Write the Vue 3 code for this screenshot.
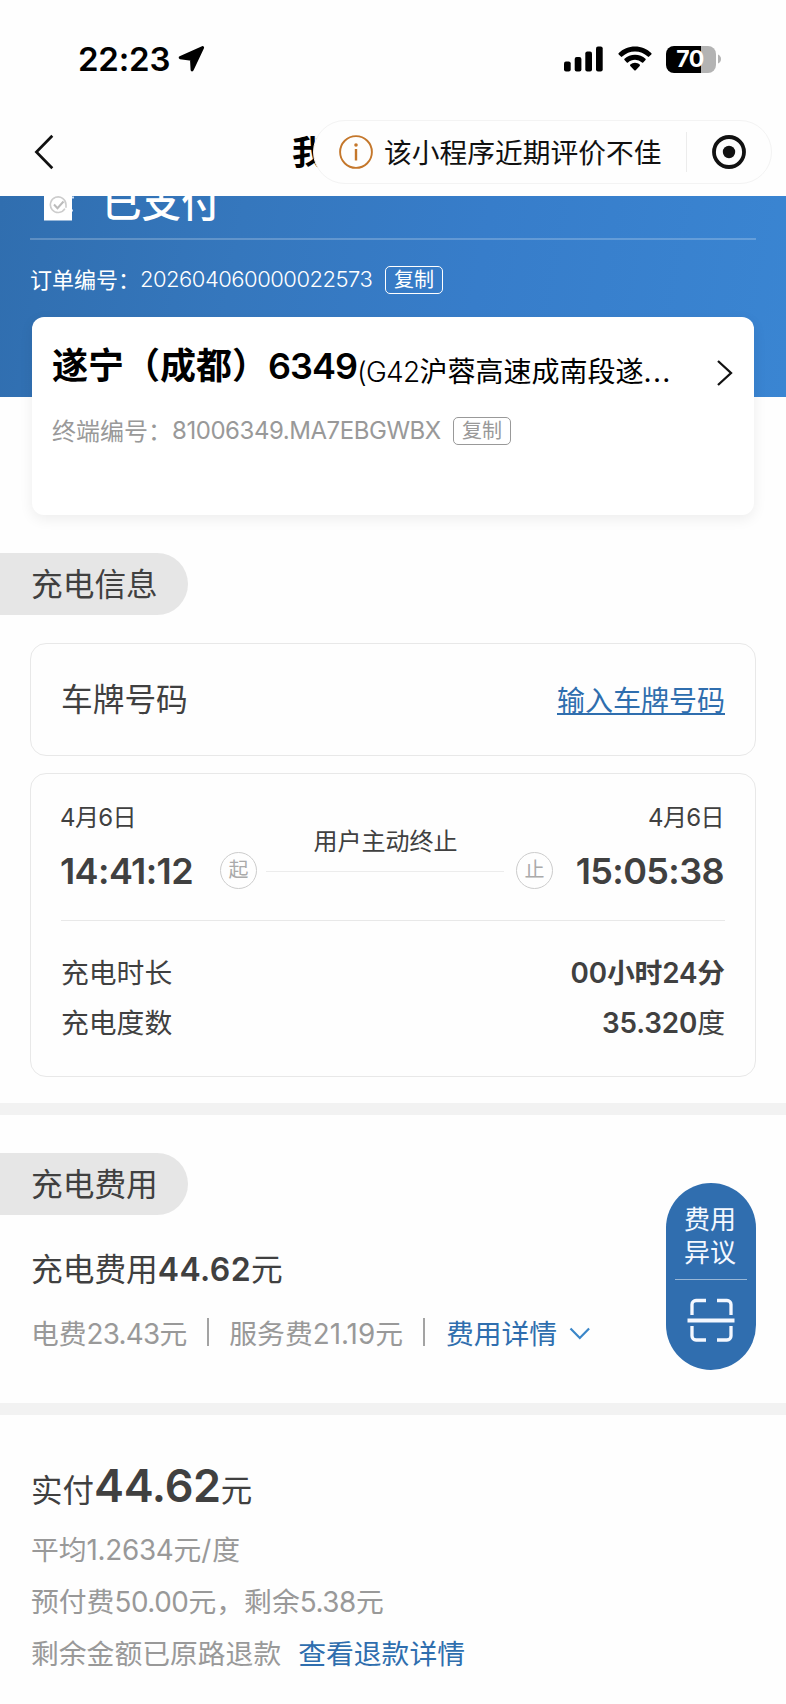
<template>
  <div class="page">
    <div class="status-bar">
      <div class="clock">
        <span class="clock-text">22:23</span>
        <svg width="28" height="28" viewBox="0 0 28 28">
          <path d="M24.600 2.600 2.200 12.700l11.300 1.600.6 10.600z" fill="#000" stroke="#000" stroke-width="3" stroke-linejoin="round" />
        </svg>
      </div>
      <div class="indicators">
        <svg class="signal" width="39" height="26" viewBox="0 0 39 26">
          <rect v-for="bar in signalBars" :key="bar.x" :x="bar.x" :y="bar.y" width="6.700" :height="25.5 - bar.y" rx="2" />
        </svg>
        <svg class="wifi" width="34" height="26" viewBox="0 0 34 26">
          <path d="M17 .5c6.300 0 12.200 2.500 16.300 6.600.4.4.4.900 0 1.300l-2.200 2.200c-.4.4-.9.4-1.300 0A18.300 18.300 0 0 0 17 5.400 18.300 18.300 0 0 0 4.200 10.600c-.4.4-.9.4-1.300 0L.7 8.400c-.4-.4-.4-.9 0-1.300C4.800 3 10.700.5 17 .5z" />
          <path d="M17 8.700c4 0 7.700 1.500 10.500 4.100.4.400.4.900 0 1.300l-2.300 2.300c-.3.300-.8.300-1.200 0A10.400 10.400 0 0 0 17 13.700c-2.700 0-5.100 1-7 2.700-.4.300-.9.300-1.200 0l-2.300-2.300c-.4-.4-.4-.9 0-1.300A15.400 15.400 0 0 1 17 8.700z" />
          <path d="M17 16.800c1.800 0 3.500.7 4.700 1.800.4.4.4.900 0 1.300l-4 4.300c-.4.400-1 .4-1.400 0l-4-4.300c-.4-.4-.4-.9 0-1.300a7 7 0 0 1 4.700-1.800z" />
        </svg>
        <div class="battery">70</div>
        <svg class="battery-tip" width="3" height="10" viewBox="0 0 3 10">
          <path d="M0 0.500C2 1.500 3 3 3 5S2 8.500 0 9.500z" fill="#b3b3b3" />
        </svg>
      </div>
    </div>

    <div class="nav">
      <svg class="back" width="20" height="36" viewBox="0 0 20 36">
        <path d="M18.300 1.700 2.400 18l15.900 16.300" fill="none" stroke="#111" stroke-width="2.700" />
      </svg>
      <div class="nav-title">我</div>
      <div class="capsule">
        <svg class="info" width="34" height="34" viewBox="0 0 34 34">
          <circle cx="17" cy="17" r="15.900" fill="none" stroke="#c4772b" stroke-width="1.900" />
          <circle cx="17" cy="10" r="1.800" fill="#c4772b" />
          <path d="M17 14v11.500" stroke="#c4772b" stroke-width="2.400" />
        </svg>
        <span class="capsule-text">该小程序近期评价不佳</span>
        <i class="capsule-line"></i>
        <svg width="34" height="34" viewBox="0 0 34 34">
          <circle cx="17" cy="17" r="15" fill="none" stroke="#111" stroke-width="3.800" />
          <circle cx="17" cy="17" r="6.200" fill="#111" />
        </svg>
      </div>
    </div>

    <div class="hero">
      <div class="pay-state">
        <svg class="pay-icon" width="30" height="25" viewBox="0 0 30 25">
          <path d="M0 0h28v24.500H0z" fill="#fff" />
          <path d="M28 1.500h2M28 14.500h1" stroke="#cfe0f8" stroke-width="2" />
          <path d="M20.900 12.700A7.800 7.800 0 1 1 22 8.700v3" fill="none" stroke="#ccc" stroke-width="1.600" />
          <path d="m10 8.500 3.500 3.700 6-6.700" fill="none" stroke="#bbb" stroke-width="2" />
        </svg>
        <span class="pay-text">已支付</span>
      </div>
      <div class="order-row">
        <span class="label">订单编号：</span>
        <span class="order-no">202604060000022573</span>
        <span class="copy">复制</span>
      </div>
    </div>

    <div class="station">
      <div class="station-head">
        <div class="station-name">遂宁（成都）<span class="station-num">6349</span></div>
        <div class="station-addr"><span class="addr-latin">(G42</span>沪蓉高速成南段遂<span class="dots">...</span></div>
        <svg width="18" height="28" viewBox="0 0 18 28">
          <path d="m2 2 13 12L2 26" fill="none" stroke="#111" stroke-width="2.300" />
        </svg>
      </div>
      <div class="terminal-row">
        <span class="label">终端编号：</span>
        <span class="terminal-no">81006349.MA7EBGWBX</span>
        <span class="copy gray">复制</span>
      </div>
    </div>

    <div class="section-tag">充电信息</div>

    <div class="box plate">
      <span class="plate-label">车牌号码</span>
      <a class="plate-link">输入车牌号码</a>
    </div>

    <div class="box detail">
      <div class="period">
        <div class="moment">
          <div class="date">4月6日</div>
          <div class="time">14:41:12</div>
        </div>
        <div class="dot">起</div>
        <div class="track">用户主动终止</div>
        <div class="dot">止</div>
        <div class="moment end">
          <div class="date">4月6日</div>
          <div class="time">15:05:38</div>
        </div>
      </div>
      <div class="row">
        <span>充电时长</span>
        <span class="strong">00小时24分</span>
      </div>
      <div class="row">
        <span>充电度数</span>
        <span><span class="strong">35.320</span>度</span>
      </div>
    </div>

    <div class="band"></div>

    <div class="section-tag">充电费用</div>
    <div class="fee-total">充电费用<b>44.62</b>元</div>
    <div class="fee-line">
      <span>电费<em class="power">23.43</em>元</span>
      <i></i>
      <span>服务费<em class="service">21.19</em>元</span>
      <i></i>
      <span class="link">费用详情</span>
      <svg width="22" height="13" viewBox="0 0 22 13">
        <path d="m1.500 1.500 9.300 9.500 9.300-9.500" fill="none" stroke="#3a86c8" stroke-width="2.200" />
      </svg>
    </div>

    <div class="band"></div>

    <div class="paid">
      <div class="paid-total">实付<b>44.62</b>元</div>
      <div class="paid-line">平均<em>1.2634</em>元<em class="slash">/</em>度</div>
      <div class="paid-line">预付费<em class="prepay">50.00</em>元，剩余<em class="prepay">5.38</em>元</div>
      <div class="paid-line">剩余金额已原路退款<span class="link refund">查看退款详情</span></div>
    </div>

    <!-- 悬浮按钮 -->
    <div class="fab">
      <div class="fab-text">费用<br />异议</div>
      <svg width="48" height="44" viewBox="0 0 48 44" fill="none" stroke="#f4f8ff">
        <path d="M5 17V6.500a4 4 0 0 1 4-4h10M30 2.500h10a4 4 0 0 1 4 4V17M5 28v10a4 4 0 0 0 4 4h10M30 42h10a4 4 0 0 0 4-4V28" stroke-width="3.300" />
        <path d="M.5 22.500h47" stroke-width="4" />
      </svg>
    </div>
  </div>
</template>

<script setup>
// 信号格
const signalBars = [
  { x: 0, y: 15.5 },
  { x: 10.7, y: 11 },
  { x: 21.3, y: 5.5 },
  { x: 32, y: 0.5 },
]
</script>

<style>
body { background: #fff; }
</style>

<style scoped>
.page {
  position: relative;
  width: 786px;
  height: 1704px;
  overflow: hidden;
  background: #fefefe;
  color: #404040;
  font-family: Inter, "Noto Sans CJK SC", sans-serif;
  font-size: 27.8px;
}
.page * { box-sizing: border-box; }
svg { display: block; flex: none; }
em { font-style: normal; letter-spacing: -.3px; }

.status-bar {
  height: 108px;
  padding: 10px 65px 0 78px;
  display: flex;
  justify-content: space-between;
  align-items: center;
}
.clock { display: flex; align-items: center; gap: 8px; color: #000; }
.clock-text { width: 92px; font-size: 33px; font-weight: 600; line-height: 40px; letter-spacing: -.2px; white-space: nowrap; }
.indicators { display: flex; align-items: center; }
.signal { margin-top: -1px; }
.wifi { margin: -1px 14px 0 15px; }
.battery {
  width: 50px;
  height: 27px;
  padding-right: 2px;
  border-radius: 8px;
  background: linear-gradient(90deg, #000 70%, #b3b3b3 70%);
  color: #fff;
  font-size: 23px;
  font-weight: 700;
  line-height: 27px;
  letter-spacing: -.5px;
  text-align: center;
}
.battery-tip { margin-left: 2px; }

.nav {
  position: relative;
  height: 88px;
  padding-left: 34px;
  display: flex;
  align-items: center;
  background: #fefefe;
}
.nav-title { margin: 2px 0 0 238px; font-size: 34px; font-weight: 700; color: #000; line-height: 40px; }
.capsule {
  position: absolute;
  left: 313px;
  top: 12px;
  width: 459px;
  height: 64px;
  padding: 0 25px;
  border: 1px solid #f3f3f3;
  border-radius: 32px;
  background: #fefefe;
  display: flex;
  align-items: center;
  color: #111;
}
.capsule-text { margin: 2px 0 0 11px; font-size: 27.75px; line-height: 40px; white-space: nowrap; }
.capsule-line { width: 1px; height: 40px; margin: 0 26px 0 24px; background: #ececec; }

.hero {
  height: 201px;
  overflow: hidden;
  padding: 0 30px;
  background: linear-gradient(100deg, #306eaf 0%, #3577bd 30%, #377dca 60%, #3a85d2 100%);
  color: #fff;
}
.pay-state {
  height: 44px;
  border-bottom: 2px solid rgba(255, 255, 255, .22);
  padding-left: 14px;
  display: flex;
}
.pay-text { margin: -18px 0 0 28px; font-size: 39.5px; font-weight: 500; line-height: 50px; }
.order-row { margin-top: 22px; display: flex; align-items: center; height: 36px; font-size: 22px; white-space: nowrap; }
.label { margin-top: -4px; }
.order-no { width: 233px; margin-top: -2px; letter-spacing: -.5px; font-weight: 300; }
.copy {
  width: 58px;
  height: 28px;
  margin-left: 12px;
  border: 1.500px solid currentColor;
  border-radius: 5px;
  font-size: 20px;
  line-height: 26px;
  text-align: center;
}
.copy.gray { color: #999; }

.station {
  position: relative;
  width: 722px;
  height: 198px;
  margin: -80px 0 0 32px;
  padding: 26px 20px 0 20px;
  border-radius: 12px;
  background: #fff;
  box-shadow: 0 4px 14px rgba(0, 0, 0, .07);
  color: #000;
}
.station-head { display: flex; align-items: center; height: 60px; white-space: nowrap; }
.station-name { width: 305px; margin-top: -15px; font-size: 36px; font-weight: 700; line-height: 44px; }
.station-num { font-weight: 600; letter-spacing: -1px; }
.station-addr { width: 361px; margin-top: -2px; font-size: 28px; line-height: 40px; }
.addr-latin { letter-spacing: -.7px; font-weight: 350; }
.dots { letter-spacing: 1.3px; }
.terminal-row { display: flex; align-items: center; margin-top: 10px; height: 36px; font-size: 24px; color: #999; white-space: nowrap; }
.terminal-row .label { margin-top: -3px; }
.terminal-no { width: 269px; margin-top: -1px; letter-spacing: -.45px; }

.section-tag {
  width: 188px;
  height: 62px;
  margin-top: 38px;
  padding-left: 31px;
  border-radius: 0 31px 31px 0;
  background: #e6e6e6;
  font-size: 31.7px;
  line-height: 63px;
}

.box { margin: 0 30px; border: 1px solid #e8e8e8; border-radius: 16px; }
.plate {
  height: 113px;
  margin-top: 28px;
  padding: 0 30px;
  display: flex;
  align-items: center;
  justify-content: space-between;
  font-size: 31.7px;
}
.plate-label { margin-top: -6px; }
.plate-link { margin-top: -2px; font-size: 28px; color: #2f6eae; text-decoration: underline; text-decoration-thickness: 2px; text-underline-offset: 2px; }

.detail { height: 304px; margin-top: 17px; padding: 26px 30px 0; }
.period { height: 121px; border-bottom: 1px solid #e8e8e8; display: flex; white-space: nowrap; }
.moment { width: 160px; margin-left: -1px; }
.moment.end { width: 172px; margin: 0 0 0 auto; padding-right: 1px; text-align: right; }
.date { font-size: 24px; line-height: 36px; letter-spacing: -.6px; }
.time { margin-top: 13px; font-size: 36px; font-weight: 600; line-height: 44px; letter-spacing: -.6px; }
.dot {
  width: 37px;
  height: 37px;
  margin-top: 52px;
  border: 1.500px solid #ccc;
  border-radius: 50%;
  font-size: 20px;
  line-height: 35px;
  text-align: center;
  color: #aaa;
}
.track {
  width: 238px;
  height: 50px;
  margin: 22px 12px 0 9px;
  padding-left: 1px;
  border-bottom: 1px solid #ececec;
  font-size: 24px;
  line-height: 39px;
  text-align: center;
}
.row { display: flex; justify-content: space-between; height: 50px; line-height: 50px; }
.period + .row { margin-top: 27px; }
.strong { font-weight: 600; letter-spacing: -.15px; }

.band { height: 12px; background: #f2f2f2; }
.detail + .band { margin-top: 26px; }
.fee-total { margin: 32px 0 0 31px; font-size: 31.7px; line-height: 46px; }
.fee-total b { font-weight: 600; font-size: 32px; letter-spacing: .4px; }
.fee-line { display: flex; align-items: center; height: 40px; margin: 19px 0 0 31px; color: #999; white-space: nowrap; }
.fee-line i { width: 2px; height: 28px; margin: 0 20px; background: #a3a3a3; }
.fee-line i + .link { margin-left: 1px; }
.fee-line svg { margin: 3px 0 0 12px; }
.fee-line + .band { margin-top: 51px; }
.power { letter-spacing: -.75px; }
.service { letter-spacing: 0; }
.link { color: #2f6eae; }

.paid { padding: 38px 0 0 31px; white-space: nowrap; }
.paid-total { font-size: 31.5px; line-height: 66px; }
.paid-total b { font-size: 45px; font-weight: 600; letter-spacing: -.3px; }
.paid-line { line-height: 52px; color: #999; }
.prepay { letter-spacing: -.4px; }
.slash { letter-spacing: 1px; }
.refund { margin-left: 17px; }

.fab {
  position: absolute;
  left: 666px;
  top: 1183px;
  width: 90px;
  height: 187px;
  padding: 20px 9px 0;
  border-radius: 45px;
  background: #306eaf;
  color: #f4f8ff;
  display: flex;
  flex-direction: column;
  align-items: center;
}
.fab-text { width: 72px; height: 77px; padding-right: 2px; border-bottom: 1px solid rgba(255, 255, 255, .5); font-size: 26px; line-height: 33px; text-align: center; }
.fab svg { margin-top: 18px; }
</style>
